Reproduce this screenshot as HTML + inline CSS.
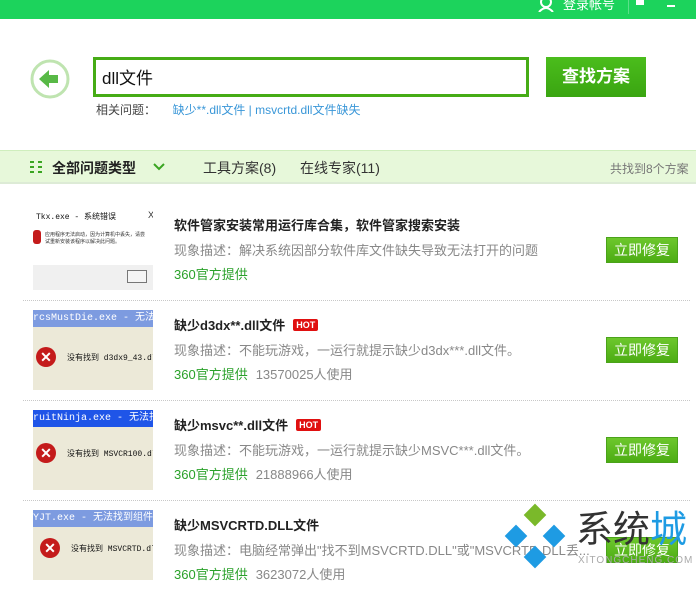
<!DOCTYPE html>
<html><head><meta charset="utf-8"><style>
*{margin:0;padding:0;box-sizing:border-box}
body{width:696px;height:578px;overflow:hidden;background:#fff;font-family:"Liberation Sans","Noto Sans CJK SC",sans-serif;position:relative;color:#333}
.abs{position:absolute}
.top{left:0;top:0;width:696px;height:19px;background:#1cd35c}
.search{left:93px;top:57px;width:436px;height:40px;border:3px solid #46ac16;font-size:17px;padding:4px 0 0 6px;color:#111}
.btn{left:546px;top:57px;width:100px;height:40px;background:linear-gradient(#4bbd1c,#3aa511);color:#fff;font-size:17px;font-weight:bold;text-align:center;line-height:40px}
.rel{left:96px;top:101px;font-size:12px;color:#444}
.rel span{color:#3a97d8}
.bar{left:0;top:150px;width:696px;height:34px;background:#e7f8da;border-top:1px solid #cfeebd;border-bottom:2px solid #ddebd6}
.item{left:0;width:696px;height:100px}
.sep{left:23px;width:667px;border-top:1px dotted #c8c8c8}
.thumb{left:33px;top:10px;width:120px;height:80px;background:#ece9d8;overflow:hidden}
.t{left:174px;font-size:13px;font-weight:bold;color:#222}
.d{left:174px;font-size:13px;color:#888}
.p{left:174px;font-size:13px;color:#2aa12a}
.p span{color:#888;margin-left:8px}
.fix{left:606px;width:72px;height:26px;background:linear-gradient(#6dc72d,#4cac13);border:1px solid #4aa31a;color:#fff;font-size:14px;text-align:center;line-height:24px}
.hot{display:inline-block;background:#e01010;color:#fff;font-size:9px;padding:0 3px;line-height:12px;margin-left:8px;vertical-align:2px;border-radius:2px}
.xb{width:20px;height:20px;border-radius:50%;background:#c41b1b;color:#fff;font-size:14px;font-weight:bold;text-align:center;line-height:20px}
.tb{left:0;top:0;width:120px;height:17px;background:#3f6ce8;color:#fff;font-family:"Liberation Mono",monospace;font-size:10px;line-height:17px;white-space:nowrap}
.mt{font-family:"Liberation Mono",monospace;font-size:8px;color:#111;white-space:nowrap}
</style></head><body>
<div class="abs top">
 <svg class="abs" style="left:537px;top:0" width="18" height="12"><circle cx="9" cy="2" r="5" fill="none" stroke="#fff" stroke-width="2"/><path d="M2 12 Q9 4 16 12" fill="none" stroke="#fff" stroke-width="2"/></svg>
 <div class="abs" style="left:563px;top:-6px;font-size:13px;color:#fff">登录帐号</div>
 <div class="abs" style="left:628px;top:0;width:1px;height:14px;background:#5be08a"></div>
 <div class="abs" style="left:636px;top:0;width:8px;height:5px;background:#fff"></div>
 <div class="abs" style="left:667px;top:5px;width:8px;height:2px;background:#fff"></div>
</div>
<svg class="abs" style="left:29px;top:58px" width="42" height="42"><circle cx="21" cy="21" r="18" fill="#fff" stroke="#bfe4b0" stroke-width="3"/><path d="M10 21 L20 12 L20 17 L29 17 L29 25 L20 25 L20 30 Z" fill="#58b946"/></svg>
<div class="abs search">dll文件</div>
<div class="abs btn">查找方案</div>
<div class="abs rel">相关问题：&nbsp;&nbsp;&nbsp;&nbsp; <span>缺少**.dll文件 | msvcrtd.dll文件缺失</span></div>
<div class="abs bar">
 <div class="abs" style="left:30px;top:10px;width:12px;height:12px;background:repeating-linear-gradient(#3aa521 0 2px,transparent 2px 5px);"></div>
 <div class="abs" style="left:34px;top:10px;width:4px;height:12px;background:#e7f8da"></div>
 <div class="abs" style="left:52px;top:7px;font-size:14px;font-weight:bold;color:#222">全部问题类型</div>
 <svg class="abs" style="left:153px;top:11px" width="12" height="9"><path d="M1 2 L6 7 L11 2" fill="none" stroke="#3aa521" stroke-width="2"/></svg>
 <div class="abs" style="left:203px;top:7px;font-size:14px;color:#333">工具方案(8)</div>
 <div class="abs" style="left:300px;top:7px;font-size:14px;color:#333">在线专家(11)</div>
 <div class="abs" style="left:610px;top:9px;font-size:12px;color:#777">共找到8个方案</div>
</div>

<div class="abs item" style="top:198px">
 <div class="abs thumb" style="background:#fff;top:12px">
  <div class="abs mt" style="left:3px;top:1px">Tkx.exe - 系统错误</div><div class="abs" style="left:115px;top:0;font-size:9px">X</div>
  <div class="abs" style="left:0;top:20px;width:8px;height:14px;background:#c41b1b;border-radius:3px"></div>
  <div class="abs" style="left:12px;top:21px;font-size:5px;width:100px;color:#333">应用程序无法启动，因为计算机中丢失，请尝试重新安装该程序以解决此问题。</div>
  <div class="abs" style="left:0;top:55px;width:120px;height:25px;background:#f0f0f0"></div>
  <div class="abs" style="left:94px;top:60px;width:20px;height:13px;border:1px solid #777;background:#f5f5f5"></div>
 </div>
 <div class="abs t" style="top:17px">软件管家安装常用运行库合集，软件管家搜索安装</div>
 <div class="abs d" style="top:42px">现象描述：解决系统因部分软件库文件缺失导致无法打开的问题</div>
 <div class="abs p" style="top:66px">360官方提供</div>
 <div class="abs fix" style="top:39px">立即修复</div>
</div>
<div class="abs sep" style="top:300px"></div>

<div class="abs item" style="top:298px">
 <div class="abs thumb" style="top:12px"><div class="abs tb" style="background:#7d9be0">rcsMustDie.exe - 无法找</div><div class="abs xb" style="left:3px;top:37px">✕</div><div class="abs mt" style="left:34px;top:42px">没有找到 d3dx9_43.dll</div></div>
 <div class="abs t" style="top:17px">缺少d3dx**.dll文件<span class="hot">HOT</span></div>
 <div class="abs d" style="top:42px">现象描述：不能玩游戏，一运行就提示缺少d3dx***.dll文件。</div>
 <div class="abs p" style="top:66px">360官方提供<span>13570025人使用</span></div>
 <div class="abs fix" style="top:39px">立即修复</div>
</div>
<div class="abs sep" style="top:400px"></div>

<div class="abs item" style="top:398px">
 <div class="abs thumb" style="top:12px"><div class="abs tb" style="background:#1f55e8">ruitNinja.exe - 无法找到</div><div class="abs xb" style="left:3px;top:33px">✕</div><div class="abs mt" style="left:34px;top:38px">没有找到 MSVCR100.dll</div></div>
 <div class="abs t" style="top:17px">缺少msvc**.dll文件<span class="hot">HOT</span></div>
 <div class="abs d" style="top:42px">现象描述：不能玩游戏，一运行就提示缺少MSVC***.dll文件。</div>
 <div class="abs p" style="top:66px">360官方提供<span>21888966人使用</span></div>
 <div class="abs fix" style="top:39px">立即修复</div>
</div>
<div class="abs sep" style="top:500px"></div>

<div class="abs item" style="top:498px">
 <div class="abs thumb" style="top:12px;height:70px"><div class="abs tb" style="background:#7d9be0">YJT.exe - 无法找到组件</div><div class="abs xb" style="left:7px;top:28px">✕</div><div class="abs mt" style="left:38px;top:33px">没有找到 MSVCRTD.dll</div></div>
 <div class="abs t" style="top:17px">缺少MSVCRTD.DLL文件</div>
 <div class="abs d" style="top:42px;white-space:nowrap">现象描述：电脑经常弹出"找不到MSVCRTD.DLL"或"MSVCRTD.DLL丢...</div>
 <div class="abs p" style="top:66px">360官方提供<span>3623072人使用</span></div>
 <div class="abs fix" style="top:39px">立即修复</div>
</div>

<svg class="abs" style="left:502px;top:503px" width="66" height="66">
 <rect x="25" y="4" width="16" height="16" fill="#7ab92a" transform="rotate(45 33 12)"/>
 <rect x="6" y="25" width="16" height="16" fill="#1e9be3" transform="rotate(45 14 33)"/>
 <rect x="44" y="25" width="16" height="16" fill="#1e9be3" transform="rotate(45 52 33)"/>
 <rect x="25" y="46" width="16" height="16" fill="#1e9be3" transform="rotate(45 33 54)"/>
</svg>
<div class="abs" style="left:576px;top:505px;font-size:37px;color:#333;font-family:'Noto Sans CJK SC',sans-serif;line-height:42px">系统<span style="color:#1e9be3">城</span></div>
<div class="abs" style="left:578px;top:555px;font-size:10px;color:#aaa;letter-spacing:1px">XITONGCHENG.COM</div>
</body></html>
